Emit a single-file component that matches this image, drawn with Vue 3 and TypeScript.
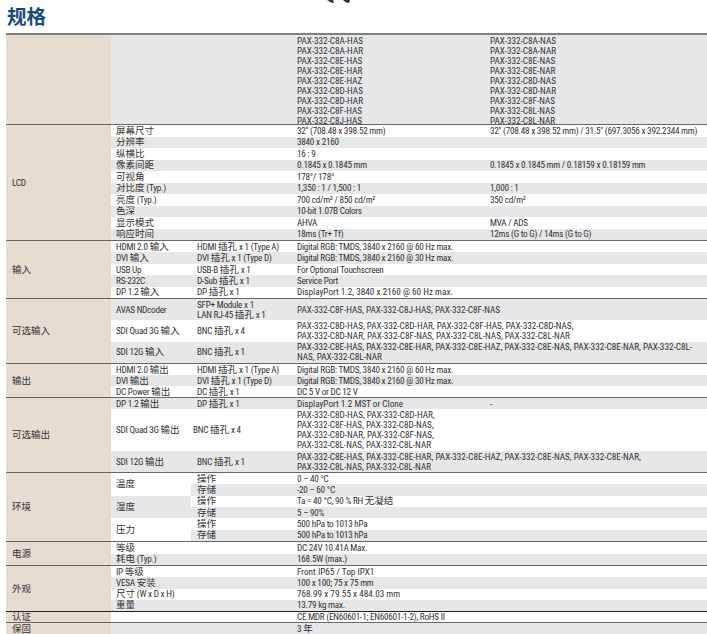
<script setup lang="ts">
import { h } from 'vue'
import type { FunctionalComponent } from 'vue'

interface Sub { sub: string; val: string; gray?: boolean }
interface Row {
  w: number
  label?: string
  sub?: string[]
  val?: string[]
  val2?: string
  gray?: boolean
  wide?: boolean
  shift?: boolean
  subs?: Sub[]
}
interface Section { cat: string; h: number; dark?: boolean; rows: Row[] }

const loose = /PAX|NAS|DisplayPort|Front|768\.99/

const T: FunctionalComponent<{ s: string }> = (props) =>
  (props.s || '')
    .split(/([\u4e00-\u9fff]+)/)
    .filter(Boolean)
    .map((t) =>
      h('span', { class: /[\u4e00-\u9fff]/.test(t) ? 'cjk' : loose.test(props.s) ? 'lat' : 'lat tight' }, t)
    )
T.props = ['s']

const hdrA = ['PAX-332-C8A-HAS','PAX-332-C8A-HAR','PAX-332-C8E-HAS','PAX-332-C8E-HAR','PAX-332-C8E-HAZ','PAX-332-C8D-HAS','PAX-332-C8D-HAR','PAX-332-C8F-HAS','PAX-332-C8J-HAS']
const hdrB = ['PAX-332-C8A-NAS','PAX-332-C8A-NAR','PAX-332-C8E-NAS','PAX-332-C8E-NAR','PAX-332-C8D-NAS','PAX-332-C8D-NAR','PAX-332-C8F-NAS','PAX-332-C8L-NAS','PAX-332-C8L-NAR']

const sections: Section[] = [
  { cat: 'LCD', h: 116, rows: [
    { w: 1, label: '屏幕尺寸', val: ['32" (708.48 x 398.52 mm)'], val2: '32" (708.48 x 398.52 mm) / 31.5" (697.3056 x 392.2344 mm)' },
    { w: 1, gray: true, label: '分辨率', val: ['3840 x 2160'] },
    { w: 1, label: '纵横比', val: ['16 : 9'] },
    { w: 1, gray: true, label: '像素间距', val: ['0.1845 x 0.1845 mm'], val2: '0.1845 x 0.1845 mm / 0.18159 x 0.18159 mm' },
    { w: 1, label: '可视角', val: ['178°/ 178°'] },
    { w: 1, gray: true, label: '对比度 (Typ.)', val: ['1,350 : 1 / 1,500 : 1'], val2: '1,000 : 1' },
    { w: 1, label: '亮度 (Typ.)', val: ['700 cd/m² / 850 cd/m²'], val2: '350 cd/m²' },
    { w: 1, gray: true, label: '色深', val: ['10-bit 1.07B Colors'] },
    { w: 1, label: '显示模式', val: ['AHVA'], val2: 'MVA / ADS' },
    { w: 1, gray: true, label: '响应时间', val: ['18ms (Tr+ Tf)'], val2: '12ms (G to G) / 14ms (G to G)' },
  ] },
  { cat: '输入', h: 58, rows: [
    { w: 1, label: 'HDMI 2.0 输入', sub: ['HDMI 插孔 x 1 (Type A)'], val: ['Digital RGB: TMDS, 3840 x 2160 @ 60 Hz max.'], wide: true },
    { w: 1, gray: true, label: 'DVI 输入', sub: ['DVI 插孔 x 1 (Type D)'], val: ['Digital RGB: TMDS, 3840 x 2160 @ 30 Hz max.'], wide: true },
    { w: 1, label: 'USB Up', sub: ['USB-B 插孔 x 1'], val: ['For Optional Touchscreen'], wide: true },
    { w: 1, gray: true, label: 'RS-232C', sub: ['D-Sub 插孔 x 1'], val: ['Service Port'], wide: true },
    { w: 1, label: 'DP 1.2 输入', sub: ['DP 插孔 x 1'], val: ['DisplayPort 1.2, 3840 x 2160 @ 60 Hz max.'], wide: true },
  ] },
  { cat: '可选输入', h: 65, rows: [
    { w: 1, gray: true, label: 'AVAS NDcoder', sub: ['SFP+ Module x 1', 'LAN RJ-45 插孔 x 1'], val: ['PAX-332-C8F-HAS, PAX-332-C8J-HAS, PAX-332-C8F-NAS'], wide: true },
    { w: 1, label: 'SDI Quad 3G 输入', sub: ['BNC 插孔 x 4'], val: ['PAX-332-C8D-HAS, PAX-332-C8D-HAR, PAX-332-C8F-HAS, PAX-332-C8D-NAS,', 'PAX-332-C8D-NAR, PAX-332-C8F-NAS, PAX-332-C8L-NAS, PAX-332-C8L-NAR'], wide: true },
    { w: 1, gray: true, label: 'SDI 12G 输入', sub: ['BNC 插孔 x 1'], val: ['PAX-332-C8E-HAS, PAX-332-C8E-HAR, PAX-332-C8E-HAZ, PAX-332-C8E-NAS, PAX-332-C8E-NAR, PAX-332-C8L-', 'NAS, PAX-332-C8L-NAR'], wide: true },
  ] },
  { cat: '输出', h: 34, rows: [
    { w: 1, label: 'HDMI 2.0 输出', sub: ['HDMI 插孔 x 1 (Type A)'], val: ['Digital RGB: TMDS, 3840 x 2160 @ 60 Hz max.'], wide: true },
    { w: 1, gray: true, label: 'DVI 输出', sub: ['DVI 插孔 x 1 (Type D)'], val: ['Digital RGB: TMDS, 3840 x 2160 @ 30 Hz max.'], wide: true },
    { w: 1, label: 'DC Power 输出', sub: ['DC 插孔 x 1'], val: ['DC 5 V or DC 12 V'], wide: true },
  ] },
  { cat: '可选输出', h: 75, rows: [
    { w: 11, gray: true, label: 'DP 1.2 输出', sub: ['DP 插孔 x 1'], val: ['DisplayPort 1.2 MST or Clone'], val2: '-' },
    { w: 42, label: 'SDI Quad 3G 输出', sub: ['BNC 插孔 x 4'], shift: true, val: ['PAX-332-C8D-HAS, PAX-332-C8D-HAR,', 'PAX-332-C8F-HAS, PAX-332-C8D-NAS,', 'PAX-332-C8D-NAR, PAX-332-C8F-NAS,', 'PAX-332-C8L-NAS, PAX-332-C8L-NAR'], wide: true },
    { w: 21, gray: true, label: 'SDI 12G 输出', sub: ['BNC 插孔 x 1'], val: ['PAX-332-C8E-HAS, PAX-332-C8E-HAR, PAX-332-C8E-HAZ, PAX-332-C8E-NAS, PAX-332-C8E-NAR,', 'PAX-332-C8L-NAS, PAX-332-C8L-NAR'], wide: true },
  ] },
  { cat: '环境', h: 69, rows: [
    { w: 1, label: '温度', subs: [{ sub: '操作', val: '0 – 40 °C' }, { sub: '存储', val: '-20 – 60 °C', gray: true }] },
    { w: 1, gray: true, label: '湿度', subs: [{ sub: '操作', val: 'Ta = 40 °C, 90 % RH 无凝结' }, { sub: '存储', val: '5 – 90%', gray: true }] },
    { w: 1, label: '压力', subs: [{ sub: '操作', val: '500 hPa to 1013 hPa' }, { sub: '存储', val: '500 hPa to 1013 hPa', gray: true }] },
  ] },
  { cat: '电源', h: 24, rows: [
    { w: 1, label: '等级', val: ['DC 24V 10.41A Max.'], wide: true },
    { w: 1, gray: true, label: '耗电 (Typ.)', val: ['168.5W (max.)'], wide: true },
  ] },
  { cat: '外观', h: 46, rows: [
    { w: 1, label: 'IP 等级', val: ['Front IP65 / Top IPX1'], wide: true },
    { w: 1, gray: true, label: 'VESA 安装', val: ['100 x 100; 75 x 75 mm'], wide: true },
    { w: 1, label: '尺寸 (W x D x H)', val: ['768.99 x 79.55 x 484.03 mm'], wide: true },
    { w: 1, gray: true, label: '重量', val: ['13.79 kg max.'], wide: true },
  ] },
  { cat: '认证', h: 11, dark: true, rows: [
    { w: 1, val: ['CE MDR (EN60601-1; EN60601-1-2), RoHS II'], wide: true },
  ] },
  { cat: '保固', h: 12, rows: [
    { w: 1, gray: true, val: ['3 年'], wide: true },
  ] },
]
</script>

<template>
  <div class="page">
    <svg class="fragment" width="26" height="4" viewBox="0 0 26 4">
      <path d="M0 0H6L7 3 4 2.5Z" fill="#333" />
      <path d="M16 0H23L22 3 19 2.5Z" fill="#333" />
    </svg>
    <h1 class="title">规格</h1>
    <div class="spec">
      <div class="section header" :style="{ height: '91px' }">
        <div class="cat"></div>
        <div class="rows gray">
          <div class="hdr-col first"><div v-for="t in hdrA" :key="t"><T :s="t" /></div></div>
          <div class="hdr-col"><div v-for="t in hdrB" :key="t"><T :s="t" /></div></div>
        </div>
      </div>
      <div
        v-for="s in sections"
        :key="s.cat"
        class="section"
        :class="{ dark: s.dark }"
        :style="{ height: s.h + 'px' }"
      >
        <div class="cat"><div><T :s="s.cat" /></div></div>
        <div class="rows">
          <div
            v-for="(r, i) in s.rows"
            :key="i"
            class="row"
            :class="{ gray: r.gray }"
            :style="{ flexGrow: r.w }"
          >
            <div class="cell label"><T :s="r.label || ''" /></div>
            <template v-if="r.subs">
              <div class="subs">
                <div v-for="(x, j) in r.subs" :key="j" class="subrow" :class="{ gray: x.gray }">
                  <div class="cell sub"><T :s="x.sub" /></div>
                  <div class="cell val"><T :s="x.val" /></div>
                </div>
              </div>
            </template>
            <template v-else>
              <div class="cell sub" :class="{ shift: r.shift }"><div v-for="t in r.sub" :key="t"><T :s="t" /></div></div>
              <div class="cell val" :class="{ wide: r.wide }"><div v-for="t in r.val" :key="t"><T :s="t" /></div></div>
              <div v-if="!r.wide" class="cell val2"><T :s="r.val2 || ''" /></div>
            </template>
          </div>
        </div>
      </div>
    </div>
  </div>
</template>

<style scoped>
.page {
  position: relative;
  width: 707px;
  height: 634px;
  overflow: hidden;
  background: #fff;
  font-family: Roboto, "Noto Sans CJK SC", sans-serif;
  font-stretch: 75%;
  font-size: 9.5px;
  line-height: 10px;
  color: #333;
}
.fragment {
  position: absolute;
  left: 327px;
  top: 0;
}
.title {
  margin: 0;
  height: 33px;
  box-sizing: border-box;
  padding: 3px 0 0 7px;
  font-family: "Noto Sans CJK SC", sans-serif;
  font-size: 19.5px;
  line-height: 26px;
  font-weight: 700;
  color: #17497e;
}
.spec {
  margin-left: 6px;
}
.section {
  display: flex;
  box-sizing: border-box;
  border-top: 1px solid #666;
}
.section.header {
  border-top: 2px solid #808080;
}
.section.dark {
  border-top-color: #222;
}
.cat {
  width: 105px;
  flex: none;
  display: flex;
  align-items: center;
  padding-left: 6px;
  box-sizing: border-box;
  background: #e6dccf;
}
.rows {
  flex: 1;
  display: flex;
  flex-direction: column;
  min-width: 0;
}
.rows.gray {
  flex-direction: row;
  background: #e6e7e8;
  padding-top: 1px;
}
.hdr-col {
  width: 193px;
}
.hdr-col.first {
  margin-left: 186px;
}
.row {
  flex: 1 1 0;
  min-height: 0;
  display: grid;
  grid-template-columns: 80px 101px 193px 1fr;
  align-items: center;
}
.gray {
  background: #e6e7e8;
}
.subrow {
  background: #fff;
}
.subrow.gray {
  background: #e6e7e8;
}
.cell {
  white-space: nowrap;
  min-width: 0;
}
.label {
  padding-left: 5px;
}
.sub {
  padding-left: 6px;
}
.sub.shift {
  padding-left: 2px;
}
.val {
  padding-left: 5px;
}
.val.wide {
  grid-column: 3 / -1;
}
.val2 {
  padding-left: 5px;
}
.subs {
  grid-column: 2 / -1;
  align-self: stretch;
  display: flex;
  flex-direction: column;
}
.subrow {
  flex: 1 1 0;
  display: grid;
  grid-template-columns: 101px 1fr;
  align-items: center;
}
</style>

<style>
html, body {
  margin: 0;
  background: #fff;
}
.lat {
  font-size: 9.2px;
}
.tight {
  letter-spacing: -0.25px;
}
</style>
